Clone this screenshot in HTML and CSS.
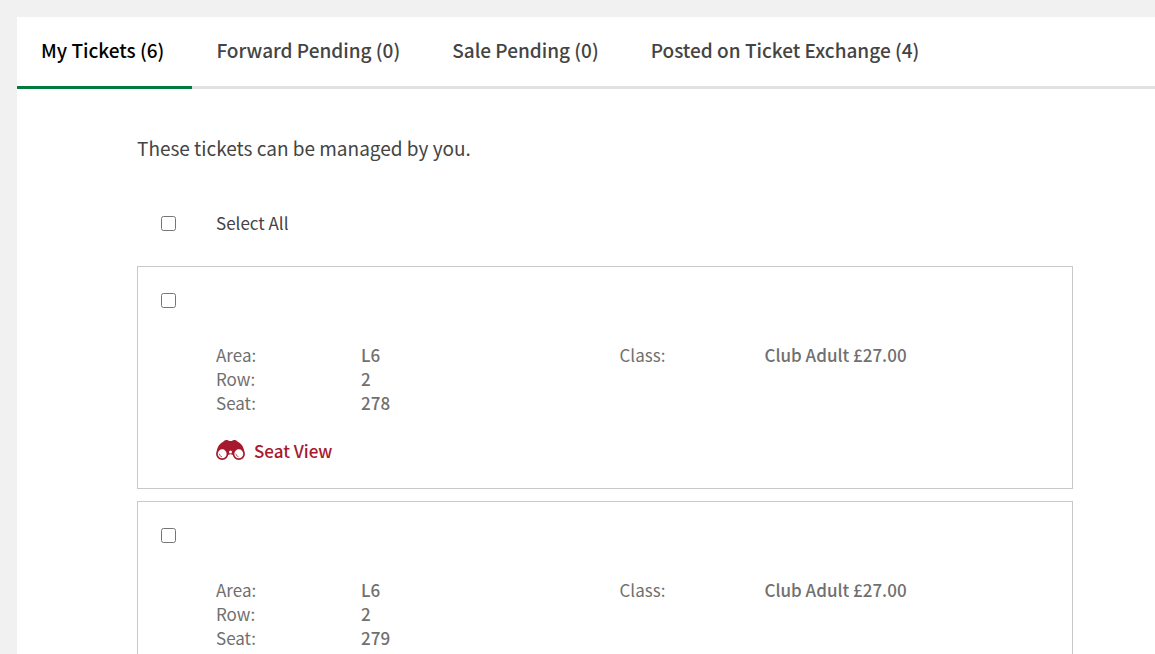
FILE: index.html
```html
<!DOCTYPE html>
<html lang="en">
<head>
    <meta charset="UTF-8">
    <meta name="viewport" content="width=device-width, initial-scale=1.0">
    <title>My Tickets</title>
    <link rel="stylesheet" href="styles.css">
</head>
<body>
    <!-- Binoculars icon, shared by the cards -->
    <svg class="icon-defs" width="0" height="0" aria-hidden="true">
        <symbol id="binoculars" viewBox="0 0 29 20">
            <path fill="currentColor" d="M.8 11 C1.6 6.6 4.2 3 7.6 1.6 C8.4 0 12 -.4 13 .9 H16 C17 -.4 20.6 0 21.4 1.6 C24.8 3 27.4 6.6 28.2 11 L22 14 L17 15 Q14.5 13.6 12 15 L7 14 Z"/>
            <circle cx="6.2" cy="13.8" r="5.3" fill="#fff" stroke="currentColor" stroke-width="1.7"/>
            <circle cx="22.8" cy="13.8" r="5.3" fill="#fff" stroke="currentColor" stroke-width="1.7"/>
            <circle cx="14.5" cy="12" r="1.5" fill="#fff"/>
            <path fill="none" stroke="currentColor" stroke-width=".7" d="M3.2 13.6 Q3.6 16.4 6 16.8 M19.8 13.6 Q20.2 16.4 22.6 16.8"/>
        </symbol>
    </svg>

    <main class="panel">
        <nav class="tabs">
            <a href="#" class="tab active">My Tickets (6)</a>
            <a href="#" class="tab">Forward Pending (0)</a>
            <a href="#" class="tab">Sale Pending (0)</a>
            <a href="#" class="tab">Posted on Ticket Exchange (4)</a>
        </nav>

        <div class="content">
            <p class="intro">These tickets can be managed by you.</p>

            <div class="select-all">
                <input type="checkbox" id="select-all">
                <label for="select-all">Select All</label>
            </div>

            <!-- Tickets -->
            <section class="ticket">
                <input type="checkbox" aria-label="Select seat 278">
                <div class="ticket-body">
                    <div class="details">
                        <dl>
                            <dt>Area:</dt><dd>L6</dd>
                            <dt>Row:</dt><dd>2</dd>
                            <dt>Seat:</dt><dd>278</dd>
                        </dl>
                        <dl>
                            <dt>Class:</dt><dd>Club Adult £27.00</dd>
                        </dl>
                    </div>
                    <a href="#" class="seat-view"><svg><use href="#binoculars"/></svg>Seat View</a>
                </div>
            </section>

            <section class="ticket">
                <input type="checkbox" aria-label="Select seat 279">
                <div class="ticket-body">
                    <div class="details">
                        <dl>
                            <dt>Area:</dt><dd>L6</dd>
                            <dt>Row:</dt><dd>2</dd>
                            <dt>Seat:</dt><dd>279</dd>
                        </dl>
                        <dl>
                            <dt>Class:</dt><dd>Club Adult £27.00</dd>
                        </dl>
                    </div>
                    <a href="#" class="seat-view"><svg><use href="#binoculars"/></svg>Seat View</a>
                </div>
            </section>
        </div>
    </main>
</body>
</html>
```
FILE: styles.css
```css
* {
    box-sizing: border-box;
}

body {
    margin: 0;
    padding: 17px 0 0 17px;
    background: #f1f1f1;
    color: #444;
    font-family: "Noto Sans CJK SC", "Open Sans", sans-serif;
    font-size: 17px;
    line-height: 24px;
}

.icon-defs {
    position: absolute;
}

.panel {
    background: #fff;
}

/* Tabs */
.tabs {
    display: flex;
    box-shadow: inset 0 -3px #e1e1e1;
}

.tab {
    padding: 21px 28px 24px 24px;
    border-bottom: 3px solid transparent;
    color: #444;
    font-size: 19px;
    font-weight: 500;
    text-decoration: none;
    white-space: nowrap;
}

.tab.active {
    border-color: #007a3d;
    color: #000;
}

.content {
    padding: 47px 82px 24px 120px;
}

.intro {
    margin: 0 0 51px;
    font-size: 19px;
}

input[type="checkbox"] {
    width: 15px;
    height: 15px;
    margin: 0;
}

.select-all {
    display: grid;
    grid-template-columns: 55px 1fr;
    align-items: center;
    margin-bottom: 31px;
    padding-left: 24px;
}

/* Ticket cards */
.ticket {
    display: grid;
    grid-template-columns: 55px 1fr;
    margin-bottom: 12px;
    padding: 26px 49px 25px 23px;
    border: 1px solid #c8c8c8;
    color: #707070;
}

.ticket-body {
    padding-top: 50px;
}

.details {
    display: grid;
    grid-template-columns: 1fr 1fr;
    margin-bottom: 24px;
}

dl {
    display: grid;
    grid-template-columns: 145px 1fr;
    align-content: start;
    margin: 0;
}

dd {
    margin: 0;
    font-weight: 500;
}

.seat-view {
    display: flex;
    width: fit-content;
    gap: 9px;
    color: #a6192e;
    font-weight: 500;
    text-decoration: none;
}

.seat-view svg {
    width: 29px;
    height: 22px;
}
```
